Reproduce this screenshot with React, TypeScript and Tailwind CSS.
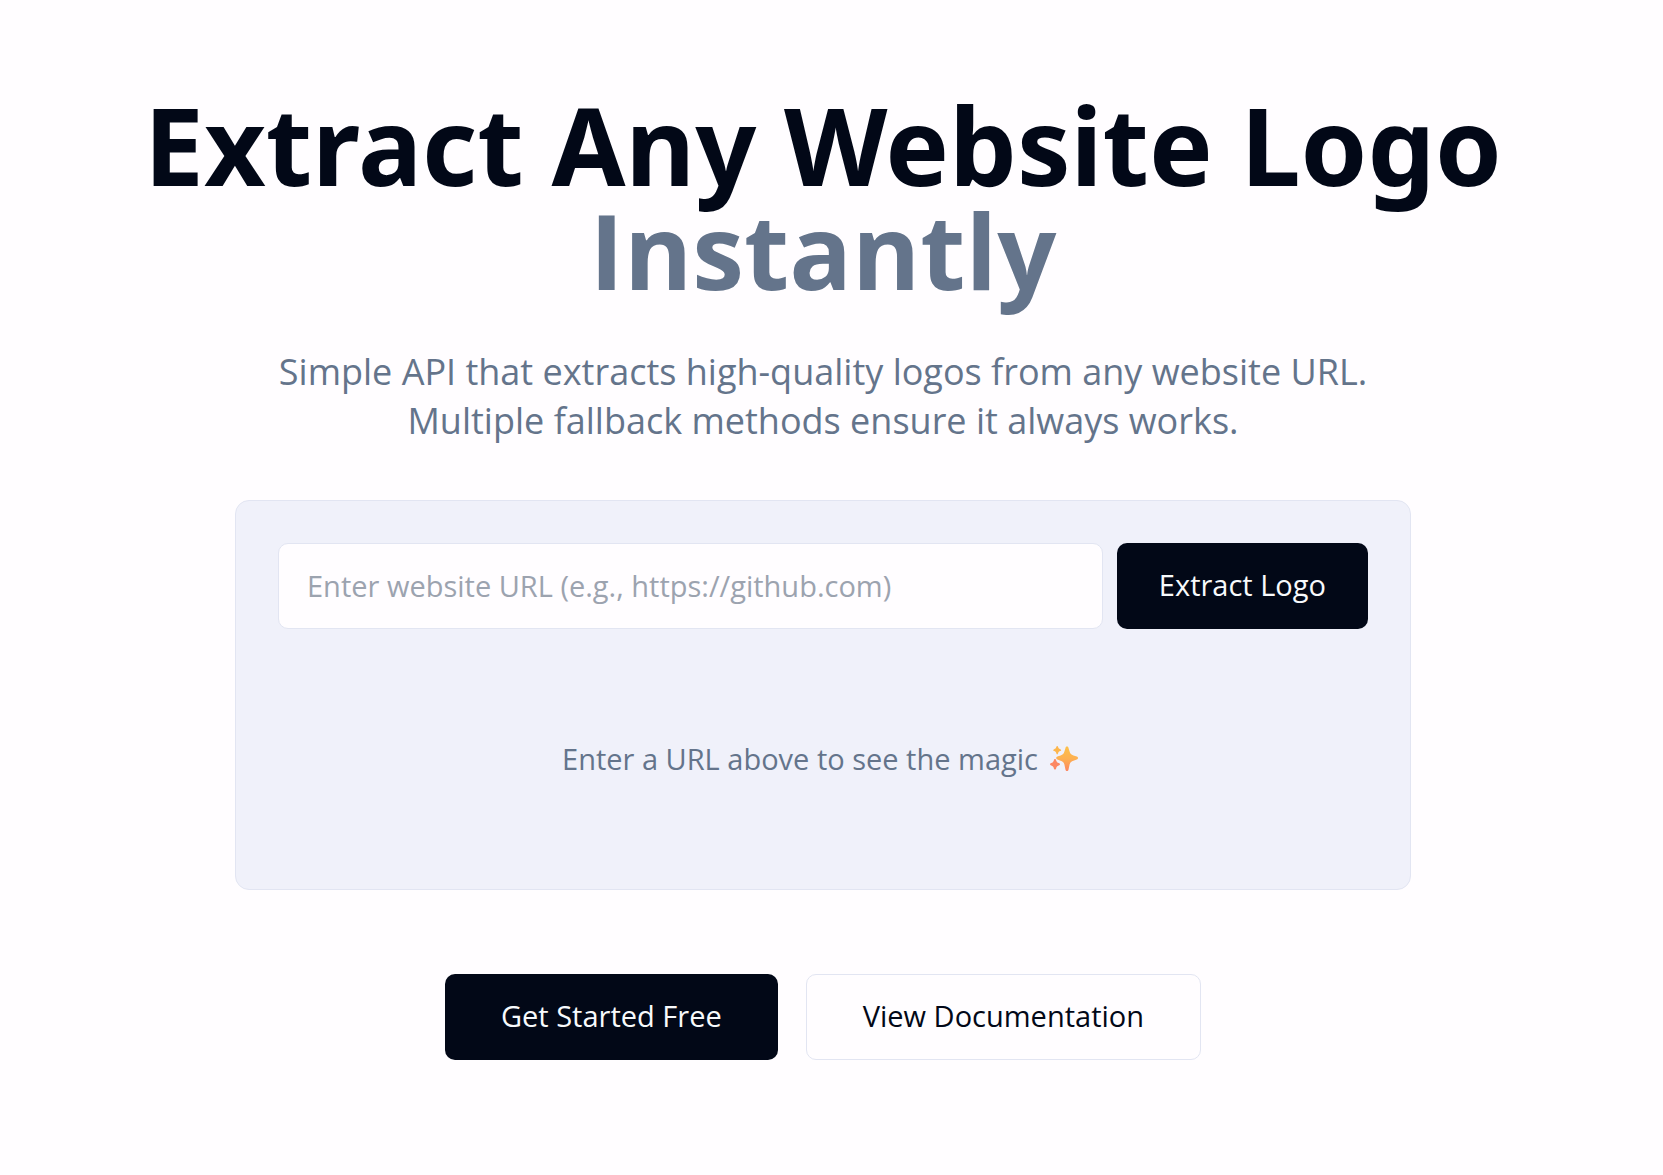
import React, { useState } from "react";

const Sparkles: React.FC = () => {
    return (
        <svg viewBox="0 0 34 28" className="w-[34px] h-7 shrink-0" aria-hidden="true">
            <defs>
                <linearGradient id="sparkle" x1="0" y1="0" x2="0" y2="1">
                    <stop offset="0" stopColor="#fcc04a" />
                    <stop offset="0.5" stopColor="#fdb052" />
                    <stop offset="1" stopColor="#fc8560" />
                </linearGradient>
            </defs>
            <path fill="url(#sparkle)" d="M17 1.6c.8 0 1.300.5 1.500 1.300l1.100 3.700c.6 2.200 1.600 3.200 3.800 3.900l3.400 1.100c.8.3 1.200.8 1.200 1.500s-.4 1.200-1.200 1.500l-3.400 1.100c-2.200.7-3.200 1.700-3.800 3.900l-1.100 5.100c-.2.8-.7 1.300-1.500 1.300s-1.300-.5-1.500-1.300l-1.100-5.100c-.6-2.200-1.600-3.200-3.800-3.900l-3.200-1.100c-.8-.3-1.200-.8-1.200-1.500s.4-1.200 1.200-1.500l3.200-1.100c2.200-.7 3.200-1.700 3.800-3.900l1.100-3.700c.2-.8.7-1.300 1.500-1.300z" />
            <path fill="#fdb64c" d="M7.200 1c.5 0 .7.400.900 1.100.4 1.300.9 1.800 2.200 2.200.6.200.9.500.9.900s-.3.700-.9.900c-1.300.4-1.800.9-2.200 2.200-.2.700-.4 1.100-.9 1.100s-.7-.4-.9-1.100c-.4-1.300-.9-1.800-2.200-2.200-.6-.2-.9-.5-.9-.9s.3-.7.9-.9c1.300-.4 1.800-.9 2.200-2.200.2-.7.4-1.100.9-1.100z" />
            <path fill="#fc8763" d="M5 14c.6 0 .9.500 1.100 1.200.5 1.700 1 2.300 2.700 2.900.8.300 1.200.7 1.200 1.200s-.4.900-1.200 1.200c-1.700.6-2.200 1.200-2.700 2.900-.2.700-.5 1.200-1.100 1.200s-.9-.5-1.100-1.200c-.5-1.700-1-2.300-2.700-2.900-.8-.3-1.200-.7-1.200-1.200s.4-.9 1.200-1.200c1.700-.6 2.200-1.200 2.700-2.900.2-.7.5-1.200 1.100-1.200z" />
        </svg>
    );
};

const App: React.FC = () => {
    const [url, setUrl] = useState("");

    return (
        <main className="min-h-screen bg-[#fffdff] pr-[17px] text-[29px] leading-[42px] text-[#020817] font-['Open_Sans',sans-serif]">
            <section className="flex flex-col items-center px-7 pt-[92px] pb-[116px] text-center">
                <h1 className="text-[107px] leading-[105px] font-bold font-['Noto_Sans',sans-serif]">
                    Extract Any Website Logo
                    <span className="block text-[104px] text-[#64748b] font-['Open_Sans',sans-serif]">Instantly</span>
                </h1>

                <p className="mt-[45px] max-w-[1176px] text-[36px] leading-[49px] text-[#64748b]">
                    Simple API that extracts high-quality logos from any website URL. Multiple fallback methods ensure it always works.
                </p>

                <div className="mt-[55px] w-full max-w-[1176px] rounded-[14px] border border-[#e2e5f2] bg-[#f0f1fa] p-[42px]">
                    <form className="flex gap-3.5" onSubmit={(e) => e.preventDefault()}>
                        <input
                            type="url"
                            aria-label="Website URL"
                            value={url}
                            onChange={(e) => setUrl(e.target.value)}
                            placeholder="Enter website URL (e.g., https://github.com)"
                            className="h-[86px] min-w-0 flex-1 rounded-[10px] border border-[#e2e5f2] bg-[#fffdff] px-7 pb-0.5 placeholder:text-[#9ca3af]"
                        />
                        <button type="submit" className="h-[86px] rounded-[10px] bg-[#020817] px-[42px] pb-0.5 text-[#f8fafc]">
                            Extract Logo
                        </button>
                    </form>

                    <div className="flex h-[218px] items-center justify-center gap-3 pt-[42px] text-[#64748b]">
                        <span>Enter a URL above to see the magic</span>
                        <Sparkles />
                    </div>
                </div>

                <div className="mt-[84px] flex gap-7">
                    <a href="#start" className="flex h-[86px] items-center rounded-[10px] bg-[#020817] px-14 pb-0.5 text-[#f8fafc]">
                        Get Started Free
                    </a>
                    <a href="#docs" className="flex h-[86px] items-center rounded-[10px] border border-[#e2e5f2] px-14 pb-0.5">
                        View Documentation
                    </a>
                </div>
            </section>
        </main>
    );
};

export default App;
